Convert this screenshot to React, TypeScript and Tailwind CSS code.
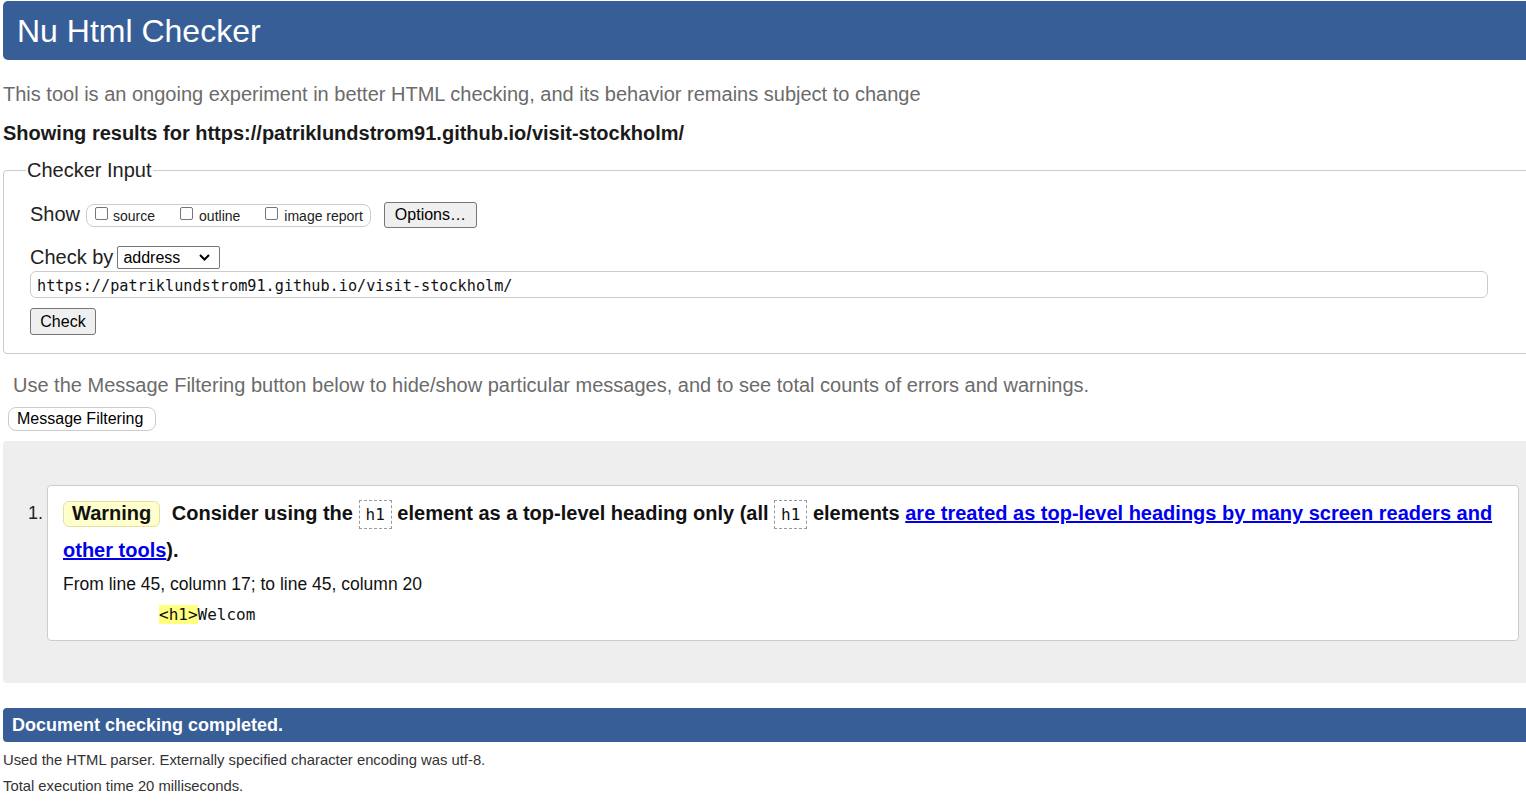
import React from "react";

const Box = () => (
  <span className="inline-block w-[13px] h-[13px] border border-[#767676] rounded-[2px] bg-white self-start mt-[2px]" />
);

export default function App() {
  return (
    <div className="w-[1526px] h-[805px] overflow-hidden bg-white font-['Liberation_Sans',Arial,sans-serif] text-[#222]">
      <div className="w-[1560px] pl-[3px] pt-[1px]">
        <div className="h-[59px] bg-[#375e97] rounded-l-[5px] text-white text-[32px] pl-[14px] flex items-center leading-none">
          Nu Html Checker
        </div>
        <p className="mt-[23px] text-[20px] leading-[23px] text-[#6b6b6b]">
          This tool is an ongoing experiment in better HTML checking, and its behavior remains subject to change
        </p>
        <p className="mt-[16px] text-[20px] leading-[23px] font-bold text-[#1a1a1a]">
          Showing results for https://patriklundstrom91.github.io/visit-stockholm/
        </p>
        <fieldset className="mt-[14px] border border-[#cccccc] rounded-[4px] pl-[26px] pb-[18px]">
          <legend className="text-[20px] leading-[23px] -ml-[4px] px-[1px] text-[#222]">Checker Input</legend>
          <div className="mt-[20px] h-[26px] flex items-center">
            <span className="text-[20px] leading-[23px] text-[#222] -mt-[2px]">Show</span>
            <div className="ml-[6px] h-[23px] border border-[#cccccc] rounded-[8px] flex items-center pl-[8px] pr-[7px] text-[14px] text-[#222]">
              <span className="flex items-center h-full">
                <Box />
                <span className="ml-[5px] mt-[3px]">source</span>
              </span>
              <span className="flex items-center h-full ml-[25px]">
                <Box />
                <span className="ml-[6px] mt-[3px]">outline</span>
              </span>
              <span className="flex items-center h-full ml-[25px]">
                <Box />
                <span className="ml-[6px] mt-[3px]">image report</span>
              </span>
            </div>
            <div className="ml-[13px] h-[26px] w-[93px] border border-[#767676] bg-[#efefef] rounded-[3px] text-[16px] flex items-center justify-center text-black">
              Options…
            </div>
          </div>
          <div className="mt-[17px] h-[24px] flex items-center">
            <span className="text-[20px] leading-[23px] text-[#222]">Check by</span>
            <div className="ml-[4px] h-[23px] w-[103px] border border-[#767676] rounded-[2px] flex items-center justify-between pl-[5px] pr-[9px] text-[16px] text-black">
              <span className="mt-[1px]">address</span>
              <svg width="11" height="7" viewBox="0 0 11 7">
                <path d="M1 1 L5.5 5.5 L10 1" fill="none" stroke="#000" strokeWidth="2" />
              </svg>
            </div>
          </div>
          <div className="mt-[2px] h-[27px] w-[1458px] border border-[#cccccc] rounded-[6px] flex items-center pl-[6px] pt-[3px] font-['DejaVu_Sans_Mono',monospace] text-[15.2px] text-[#111]">
            https://patriklundstrom91.github.io/visit-stockholm/
          </div>
          <div className="mt-[10px] h-[27px] w-[66px] border border-[#767676] bg-[#efefef] rounded-[3px] text-[16px] flex items-center justify-center text-black">
            Check
          </div>
        </fieldset>
        <p className="mt-[20px] pl-[10px] text-[20px] leading-[23px] text-[#6b6b6b]">
          Use the Message Filtering button below to hide/show particular messages, and to see total counts of errors and warnings.
        </p>
        <div className="mt-[10px] ml-[5px] h-[24px] w-[148px] border border-[#cccccc] rounded-[8px] bg-white text-[16px] flex items-center pl-[8px] text-black">
          Message Filtering
        </div>
        <div className="mt-[10px] bg-[#eeeeee] rounded-[4px] pt-[44px] pb-[42px] pl-[25px] pr-[41px] flex items-start">
          <div className="w-[19px] pt-[10px] text-[18px] leading-[37px] text-[#222]">1.</div>
          <div className="flex-1 bg-white border border-[#cccccc] rounded-[4px] pt-[9px] pl-[15px] pr-[15px] pb-[15px]">
            <p className="text-[20px] leading-[37px] font-bold text-[#111]">
              <span className="inline-block leading-[23px] px-[8px] pb-[1px] bg-[#ffffcc] border border-[#e4e0a8] rounded-[6px] mr-[6px]">
                Warning
              </span>{" "}
              Consider using the{" "}
              <code className="inline-block font-['DejaVu_Sans_Mono',monospace] font-normal text-[16px] leading-[19px] px-[6px] py-[4px] border border-dashed border-[#999999] align-middle">
                h1
              </code>{" "}
              element as a top-level heading only (all{" "}
              <code className="inline-block font-['DejaVu_Sans_Mono',monospace] font-normal text-[16px] leading-[19px] px-[6px] py-[4px] border border-dashed border-[#999999] align-middle">
                h1
              </code>{" "}
              elements{" "}
              <a href="#" className="text-[#0000ee] underline">
                are treated as top-level headings by many screen readers and other tools
              </a>
              ).
            </p>
            <p className="text-[17.5px] leading-[28px] text-[#111] mt-[1px]">
              From line 45, column 17; to line 45, column 20
            </p>
            <p className="mt-[7px] pl-[96px] font-['DejaVu_Sans_Mono',monospace] text-[16px] leading-[20px] text-[#111]">
              <span className="bg-[#ffff80]">&lt;h1&gt;</span>Welcom
            </p>
          </div>
        </div>
        <div className="mt-[25px] h-[34px] bg-[#375e97] rounded-l-[4px] pl-[9px] flex items-center text-white text-[18px] font-bold">
          Document checking completed.
        </div>
        <p className="mt-[5px] text-[14.8px] leading-[26px] text-[#333]">
          Used the HTML parser. Externally specified character encoding was utf-8.
        </p>
        <p className="text-[14.8px] leading-[26px] text-[#333]">Total execution time 20 milliseconds.</p>
      </div>
    </div>
  );
}
